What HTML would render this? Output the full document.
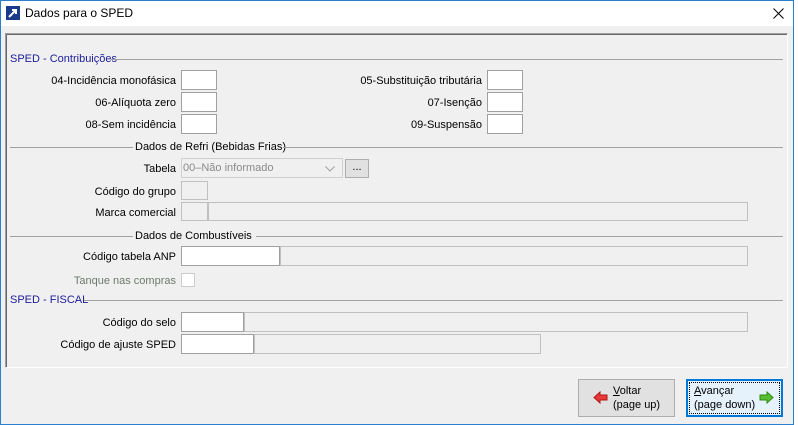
<!DOCTYPE html>
<html><head><meta charset="utf-8"><style>
*{box-sizing:border-box;margin:0;padding:0}
body{width:798px;height:425px;overflow:hidden;background:#fff;font-family:"Liberation Sans",Arial,sans-serif;font-size:11px;color:#000;position:relative}
.a{position:absolute}
.win{left:0;top:0;width:794px;height:425px;border:1px solid #2b7fd0;background:#f0f0f0}
.title{left:1px;top:1px;width:792px;height:25px;background:#fff}
.box{position:absolute;border:1px solid #a0a0a0;background:#fff}
.dis{background:#f0f0f0;border-color:#c0c0c0}
.lbl{position:absolute;text-align:right;width:170px;left:6px;line-height:14px}
.line{position:absolute;height:1px;background:#a0a0a0}
.blue{color:#1c1c9c}
</style></head><body>
<div class="a win"></div>
<div class="a title"></div>
<svg class="a" style="left:6px;top:6px" width="14" height="14"><rect width="14" height="14" fill="#1a3a8a"/><path d="M3 11 L10 4 M6 4 H10 V8" stroke="#fff" stroke-width="2" fill="none"/></svg>
<div class="a" style="left:25px;top:6px;font-size:12px">Dados para o SPED</div>
<svg class="a" style="left:773px;top:8px" width="11" height="11"><path d="M0.5 0.5 L10.5 10.5 M10.5 0.5 L0.5 10.5" stroke="#000" stroke-width="1"/></svg>
<div class="a" style="left:5px;top:33px;width:783px;height:335px;border:1px solid #a0a0a0;border-right-color:#fff;border-bottom-color:#fff;box-shadow:inset 1px 1px 0 #696969"></div>

<div class="a blue" style="left:10px;top:53px">SPED - Contribuições</div>
<div class="line" style="left:111px;top:59px;width:672px"></div>
<div class="lbl" style="top:74px">04-Incidência monofásica</div><div class="box" style="left:181px;top:70px;width:36px;height:20px"></div>
<div class="lbl" style="top:96px">06-Alíquota zero</div><div class="box" style="left:181px;top:92px;width:36px;height:20px"></div>
<div class="lbl" style="top:118px">08-Sem incidência</div><div class="box" style="left:181px;top:114px;width:36px;height:20px"></div>
<div class="lbl" style="top:74px;left:312px">05-Substituição tributária</div><div class="box" style="left:487px;top:70px;width:36px;height:20px"></div>
<div class="lbl" style="top:96px;left:312px">07-Isenção</div><div class="box" style="left:487px;top:92px;width:36px;height:20px"></div>
<div class="lbl" style="top:118px;left:312px">09-Suspensão</div><div class="box" style="left:487px;top:114px;width:36px;height:20px"></div>

<div class="line" style="left:10px;top:147px;width:123px"></div>
<div class="a" style="left:135px;top:141px">Dados de Refri (Bebidas Frias)</div>
<div class="line" style="left:283px;top:147px;width:500px"></div>
<div class="lbl" style="top:162px">Tabela</div>
<div class="box dis" style="left:181px;top:158px;width:162px;height:20px;border-color:#d0d0d0"></div>
<div class="a" style="left:183px;top:162px;color:#8a8a8a">00–Não informado</div>
<svg class="a" style="left:325px;top:166px" width="10" height="6"><path d="M0.5 0.5 L5 5 L9.5 0.5" stroke="#a0a0a0" fill="none"/></svg>
<div class="box" style="left:345px;top:159px;width:24px;height:19px;background:#e1e1e1;border-color:#adadad;text-align:center;line-height:14px">...</div>
<div class="lbl" style="top:185px">Código do grupo</div><div class="box dis" style="left:181px;top:181px;width:27px;height:19px"></div>
<div class="lbl" style="top:206px">Marca comercial</div><div class="box dis" style="left:181px;top:202px;width:27px;height:19px"></div><div class="box dis" style="left:208px;top:202px;width:540px;height:19px"></div>

<div class="line" style="left:10px;top:236px;width:123px"></div>
<div class="a" style="left:135px;top:230px">Dados de Combustíveis</div>
<div class="line" style="left:256px;top:236px;width:527px"></div>
<div class="lbl" style="top:250px">Código tabela ANP</div><div class="box" style="left:181px;top:246px;width:99px;height:20px"></div><div class="box dis" style="left:280px;top:246px;width:468px;height:20px"></div>
<div class="lbl" style="top:274px;color:#6d7a6d">Tanque nas compras</div><div class="box" style="left:181px;top:273px;width:14px;height:14px;border-color:#cccccc"></div>

<div class="a blue" style="left:10px;top:294px">SPED - FISCAL</div>
<div class="line" style="left:84px;top:300px;width:699px"></div>
<div class="lbl" style="top:316px">Código do selo</div><div class="box" style="left:181px;top:312px;width:63px;height:20px"></div><div class="box dis" style="left:244px;top:312px;width:504px;height:20px"></div>
<div class="lbl" style="top:338px">Código de ajuste SPED</div><div class="box" style="left:181px;top:334px;width:73px;height:20px"></div><div class="box dis" style="left:254px;top:334px;width:287px;height:20px"></div>

<div class="box" style="left:578px;top:379px;width:97px;height:38px;background:#e1e1e1;border-color:#adadad"></div>
<svg class="a" style="left:593px;top:391px" width="15" height="13"><path d="M1 6.5 L7 1 V4 H14 V9 H7 V12 Z" fill="#e8383a" stroke="#b01818"/></svg>
<div class="a" style="left:613px;top:384px;line-height:14px"><u>V</u>oltar<br>(page up)</div>
<div class="box" style="left:686px;top:379px;width:97px;height:38px;background:#e5f1fb;border:2px solid #0078d7"></div>
<div class="a" style="left:689px;top:382px;width:91px;height:32px;border:1px dotted #000"></div>
<svg class="a" style="left:759px;top:391px" width="15" height="13"><path d="M14 6.5 L8 1 V4 H1 V9 H8 V12 Z" fill="#58c030" stroke="#2a8a10"/></svg>
<div class="a" style="left:694px;top:384px;line-height:14px"><u>A</u>vançar<br>(page down)</div>
</body></html>
